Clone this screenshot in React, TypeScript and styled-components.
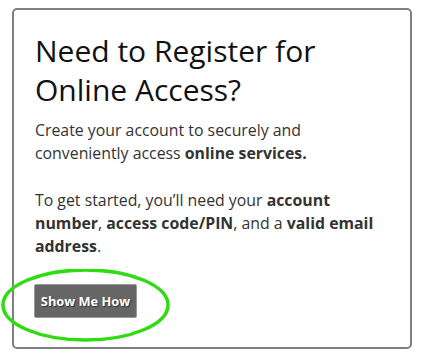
import React from "react";
import styled, { createGlobalStyle } from "styled-components";

const GlobalStyle = createGlobalStyle`
  body {
    margin: 0;
    padding: 8px 12px;
    background: #ffffff;
    font-family: "Open Sans", "Liberation Sans", sans-serif;
  }
`;

const Card = styled.div`
  position: relative;
  box-sizing: border-box;
  width: 400px;
  height: 341px;
  border: 2px solid #808080;
  border-radius: 5px;
  padding: 21px 21px 0 21px;
  background: #fff;
`;

const Title = styled.h2`
  margin: 0 0 10px 0;
  font-size: 30px;
  line-height: 39px;
  font-weight: 400;
  color: #111;
`;

const Text = styled.p`
  margin: 0 0 23px 0;
  font-size: 15.85px;
  line-height: 23.3px;
  color: #333;

  b {
    font-weight: 700;
  }
`;

const Button = styled.button`
  display: block;
  box-sizing: border-box;
  width: 103px;
  margin: 26px 0 0 -1px;
  height: 34px;
  padding: 0;
  border: 1px solid #9a9a9a;
  border-radius: 2px;
  background: #666666;
  color: #ffffff;
  font-family: "Open Sans", "Liberation Sans", sans-serif;
  font-size: 12.8px;
  font-weight: 700;
  text-align: center;
  text-shadow: 1px 1px 1px #333;
  cursor: pointer;
`;

const Circle = styled.svg`
  position: absolute;
  left: -14px;
  top: 259px;
  pointer-events: none;
`;

const App: React.FC = () => {
  return (
    <>
      <GlobalStyle />
      <Card>
        <Title>Need to Register for Online Access?</Title>
        <Text>
          Create your account to securely and conveniently access{" "}
          <b>online services.</b>
        </Text>
        <Text>
          To get started, you’ll need your <b>account number</b>,{" "}
          <b>access code/PIN</b>, and a <b>valid email address</b>.
        </Text>
        <Button>Show Me How</Button>
        <Circle width="172" height="76" viewBox="0 0 172 76">
          <ellipse
            cx="85.5"
            cy="36"
            rx="82.5"
            ry="35"
            fill="none"
            stroke="#2fdc12"
            strokeWidth="3.5"
          />
        </Circle>
      </Card>
    </>
  );
};

export default App;
